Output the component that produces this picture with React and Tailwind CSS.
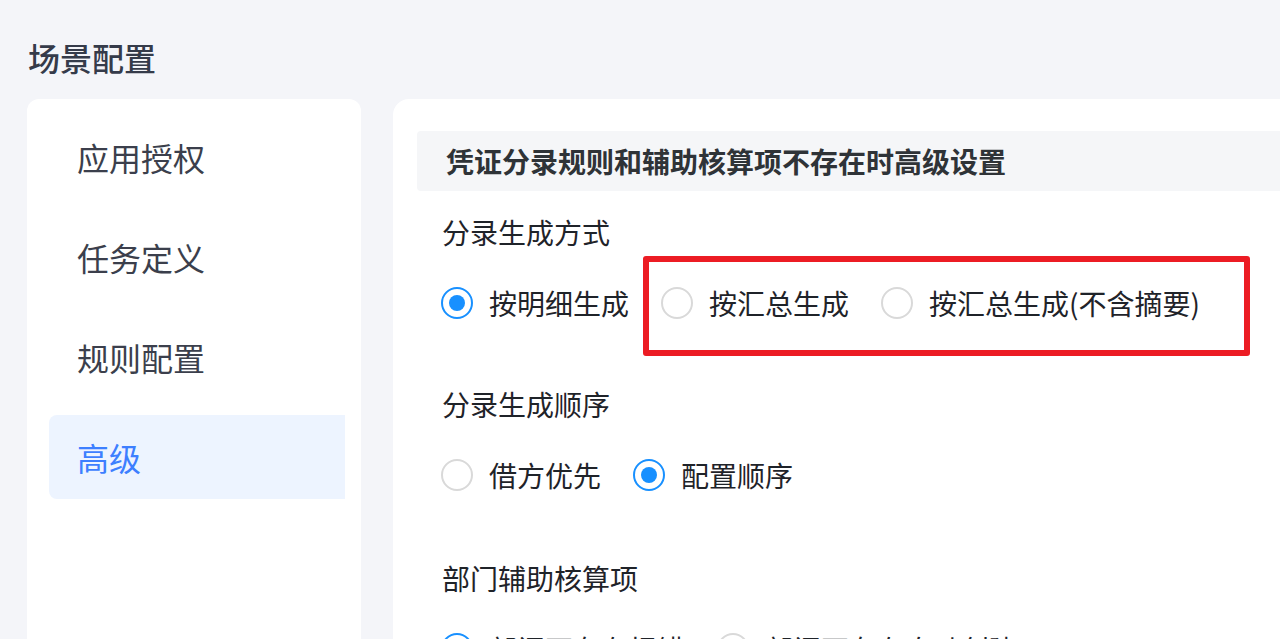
import React from 'react';

const menu = ['应用授权', '任务定义', '规则配置', '高级'];

const Radio = ({ checked, label }) => (
  <div className="flex items-center gap-4">
    <span
      className={`flex h-8 w-8 items-center justify-center rounded-full border-2 ${
        checked ? 'border-[#1890ff]' : 'border-[#d9d9d9]'
      }`}
    >
      {checked && <span className="h-4 w-4 rounded-full bg-[#1890ff]" />}
    </span>
    <span className="text-[28px] leading-10 text-[#1f2329]">{label}</span>
  </div>
);

const Group = ({ title, options, className = '' }) => (
  <div className={className}>
    <div className="h-10 pl-[25px] text-[28px] leading-10 text-[#1f2329]">{title}</div>
    <div className="mt-[31px] flex h-10 items-center gap-8 pl-6">
      {options.map((o) => (
        <Radio key={o.label} {...o} />
      ))}
    </div>
  </div>
);

export default function App() {
  return (
    <div
      className="relative h-[639px] w-full overflow-hidden bg-[#f4f5f9]"
      style={{ fontFamily: '"Noto Sans CJK SC", "Noto Sans", sans-serif' }}
    >
      <div className="pl-[28px] pt-[35px] text-[32px] font-medium leading-[44px] text-[#353b4a]">场景配置</div>

      <div className="mt-5 flex gap-8 pl-[27px]">
        {/* left menu */}
        <div className="flex h-[600px] w-[334px] shrink-0 flex-col gap-4 rounded-xl bg-white pl-[22px] pr-4 pt-4">
          {menu.map((m) => {
            const active = m === '高级';
            return (
              <div
                key={m}
                className={`flex h-[84px] items-center pl-[28px] text-[32px] ${
                  active ? 'rounded-l-lg bg-[#edf4ff] text-[#3d7fff]' : 'text-[#3b3f4c]'
                }`}
              >
                {m}
              </div>
            );
          })}
        </div>

        {/* right content */}
        <div className="h-[600px] flex-1 rounded-l-2xl bg-white pl-6 pt-8">
          <div className="flex h-[60px] items-center rounded-l bg-[#f5f6f8] pl-[29px] text-[28px] font-bold text-[#2f3337]">
            凭证分录规则和辅助核算项不存在时高级设置
          </div>

          <Group
            className="mt-[21px]"
            title="分录生成方式"
            options={[
              { label: '按明细生成', checked: true },
              { label: '按汇总生成' },
              { label: '按汇总生成(不含摘要)' },
            ]}
          />
          <Group
            className="mt-[61px]"
            title="分录生成顺序"
            options={[{ label: '借方优先' }, { label: '配置顺序', checked: true }]}
          />
          <Group
            className="mt-[63px]"
            title="部门辅助核算项"
            options={[{ label: '部门不存在报错', checked: true }, { label: '部门不存在自动创建' }]}
          />
        </div>
      </div>

      {/* highlight annotation */}
      <div className="pointer-events-none absolute left-[643px] top-[256px] h-[100px] w-[607px] rounded-[3px] border-[6px] border-[#ec1c24]" />
    </div>
  );
}
